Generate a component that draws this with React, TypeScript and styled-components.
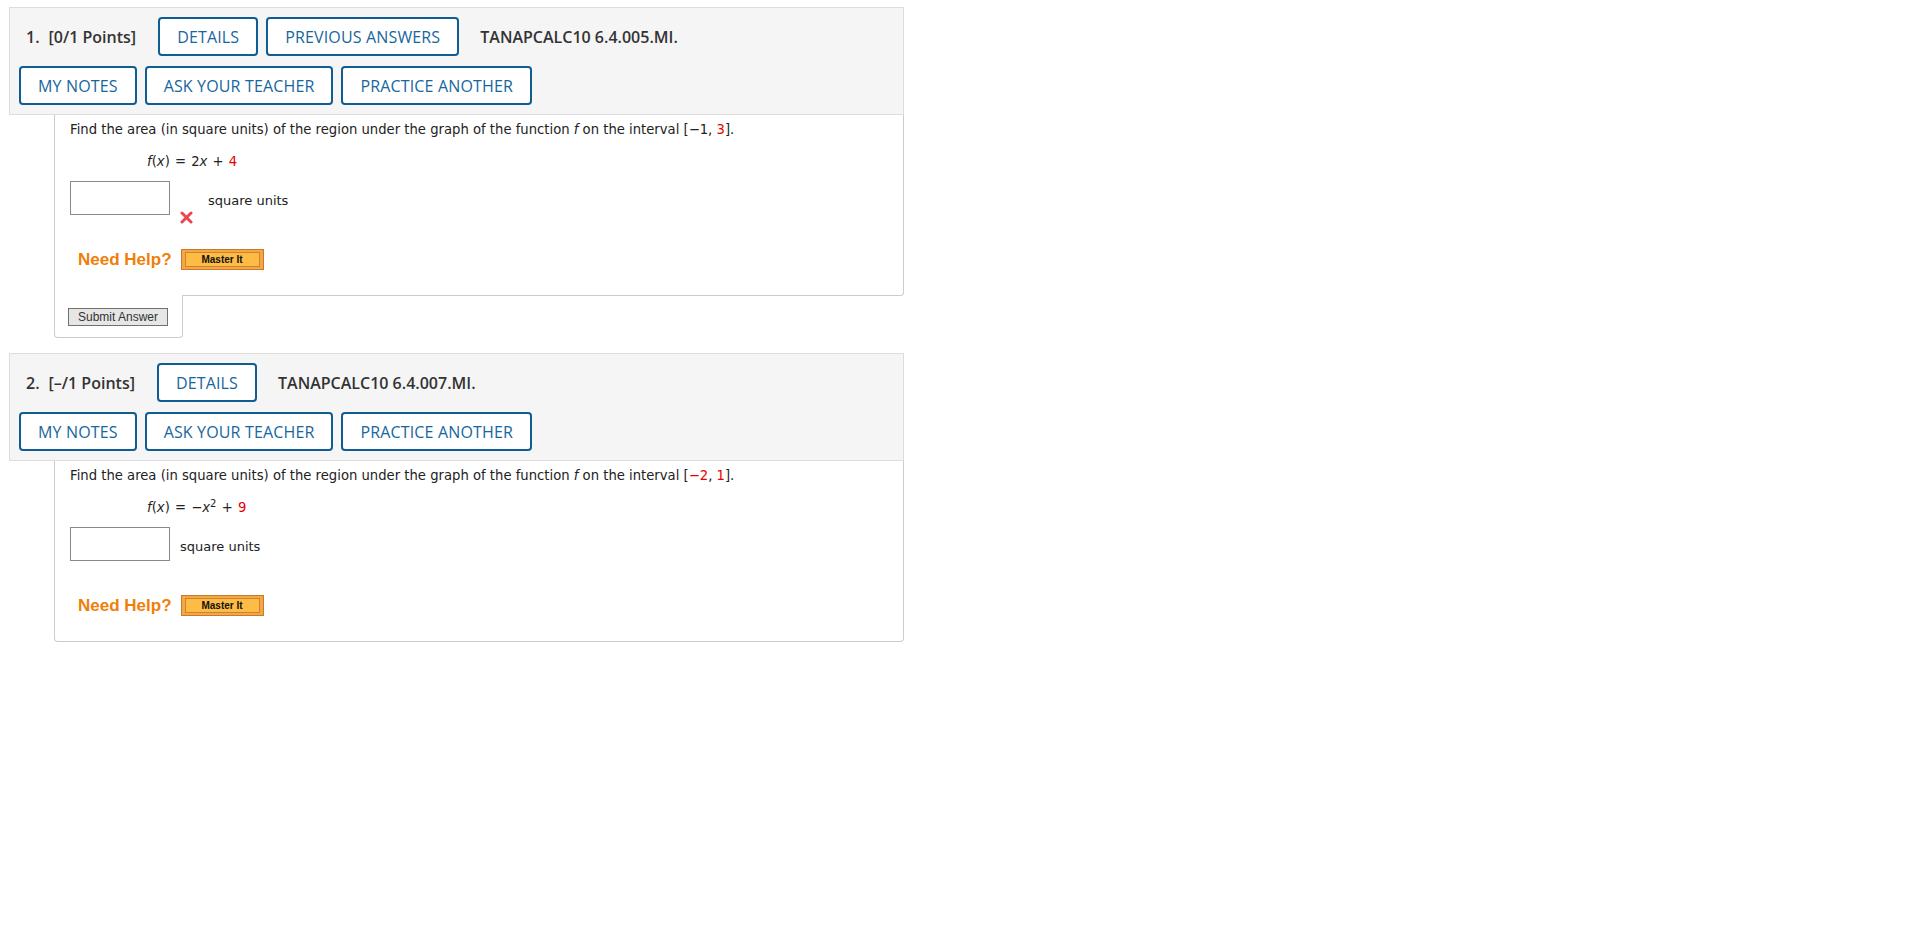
import React from 'react';
import styled, { createGlobalStyle } from 'styled-components';

const GlobalStyle = createGlobalStyle`
  body {
    margin: 0;
    background: #fff;
    font-family: 'Open Sans', 'Liberation Sans', sans-serif;
  }
`;

const Page = styled.div`
  width: 895px;
  padding: 7px 0 0 9px;
`;

const Question = styled.section`
  margin-bottom: 15px;
`;

const Header = styled.div`
  background: #f5f5f5;
  border: 1px solid #dddddd;
  padding: 9px;
  display: flex;
  flex-direction: column;
  gap: 10px;
`;

const HeaderRow = styled.div`
  display: flex;
  align-items: center;
  gap: 8px;
  height: 39px;
`;

const QNum = styled.span`
  font-size: 16px;
  font-weight: 600;
  color: #333;
  margin-left: 7px;
  display: flex;
  gap: 9px;
  margin-right: 14px;
`;

const Code = styled.span`
  font-size: 16px;
  font-weight: 600;
  color: #333;
  margin-left: 13px;
`;

const HeadButton = styled.button`
  height: 39px;
  box-sizing: border-box;
  padding: 0 17px;
  border: 2px solid #0f5d93;
  border-radius: 4px;
  background: #fff;
  color: #17669e;
  font-family: 'Open Sans', 'Liberation Sans', sans-serif;
  font-size: 16px;
  font-weight: 400;
  letter-spacing: 0.15px;
  text-transform: uppercase;
  cursor: pointer;
`;

const Body = styled.div<{ $tab?: boolean }>`
  width: 850px;
  margin-left: 45px;
  box-sizing: border-box;
  border: 1px solid #cccccc;
  border-top: none;
  border-radius: ${(p) => (p.$tab ? '0 0 4px 0' : '0 0 4px 4px')};
  padding: 6px 15px 25px;
  font-family: 'DejaVu Sans', Verdana, sans-serif;
  font-size: 13.2px;
  color: #222;
`;

const Prompt = styled.div`
  line-height: 18px;
`;

const Formula = styled.div`
  line-height: 18px;
  margin: 14px 0 0 77px;
  word-spacing: 1px;
`;

const Red = styled.span`
  color: #e80000;
`;

const Sup = styled.sup`
  font-size: 10px;
  line-height: 0;
`;

const AnswerRow = styled.div`
  display: flex;
  align-items: center;
  height: 34px;
  margin-top: 10px;
`;

const AnswerInput = styled.input`
  width: 100px;
  height: 34px;
  box-sizing: border-box;
  border: 1px solid #8a8a8a;
  margin: 0;
  padding: 0 4px;
`;

const Wrong = styled.span`
  align-self: flex-end;
  margin: 0 0 -9px 10px;
  display: flex;
`;

const Unit = styled.span<{ $gap: number }>`
  margin-left: ${(p) => p.$gap}px;
  padding-top: 5px;
  font-size: 13px;
`;

const HelpRow = styled.div`
  display: flex;
  align-items: center;
  margin: 34px 0 0 8px;
  height: 21px;
`;

const NeedHelp = styled.span`
  font-family: 'Liberation Sans', Arial, sans-serif;
  font-size: 17px;
  font-weight: 700;
  color: #ef7f0a;
  margin-right: 9px;
`;

const MasterIt = styled.span`
  width: 83px;
  height: 21px;
  box-sizing: border-box;
  border: 1px solid #c77a2c;
  background: #f7a741;
  padding: 2px 3px;
  display: flex;
`;

const MasterInner = styled.span`
  flex: 1;
  border: 1px solid #c98537;
  background: #ffbc45;
  display: flex;
  align-items: center;
  justify-content: center;
  font-family: 'Liberation Sans', Arial, sans-serif;
  font-size: 10px;
  font-weight: 700;
  color: #111;
`;

const SubmitTab = styled.div`
  width: 129px;
  margin: -1px 0 0 45px;
  box-sizing: border-box;
  border: 1px solid #cccccc;
  border-top: none;
  border-radius: 0 0 4px 4px;
  background: #fff;
  padding: 13px 0 11px 13px;
`;

const SubmitButton = styled.button`
  width: 100px;
  height: 18px;
  box-sizing: border-box;
  border: 1px solid #707070;
  background: #e6e6e6;
  font-family: 'Liberation Sans', Arial, sans-serif;
  font-size: 12px;
  color: #333;
  padding: 0;
  display: block;
`;

const XMark = () => (
  <svg width="13" height="13" viewBox="0 0 13 13">
    <path d="M2 2 L11 11 M11 2 L2 11" stroke="#ea4650" strokeWidth="3" strokeLinecap="round" />
  </svg>
);

const Need = () => (
  <HelpRow>
    <NeedHelp>Need Help?</NeedHelp>
    <MasterIt>
      <MasterInner>Master It</MasterInner>
    </MasterIt>
  </HelpRow>
);

interface HeaderProps {
  num: number;
  points: string;
  code: string;
  previous?: boolean;
}

const QuestionHeader: React.FC<HeaderProps> = ({ num, points, code, previous }) => (
  <Header>
    <HeaderRow>
      <QNum>
        <span>{num}.</span>
        <span>[{points} Points]</span>
      </QNum>
      <HeadButton>Details</HeadButton>
      {previous && <HeadButton>Previous Answers</HeadButton>}
      <Code>{code}</Code>
    </HeaderRow>
    <HeaderRow>
      <HeadButton>My Notes</HeadButton>
      <HeadButton>Ask Your Teacher</HeadButton>
      <HeadButton>Practice Another</HeadButton>
    </HeaderRow>
  </Header>
);

const App: React.FC = () => {
  return (
    <Page>
      <GlobalStyle />
      <Question>
        <QuestionHeader num={1} points="0/1" code="TANAPCALC10 6.4.005.MI." previous />
        <Body $tab>
          <Prompt>
            Find the area (in square units) of the region under the graph of the function <i>f</i> on the
            interval [−1, <Red>3</Red>].
          </Prompt>
          <Formula>
            <i>f</i>(<i>x</i>) = 2<i>x</i> + <Red>4</Red>
          </Formula>
          <AnswerRow>
            <AnswerInput type="text" />
            <Wrong>
              <XMark />
            </Wrong>
            <Unit $gap={15}>square units</Unit>
          </AnswerRow>
          <Need />
        </Body>
        <SubmitTab>
          <SubmitButton>Submit Answer</SubmitButton>
        </SubmitTab>
      </Question>
      <Question>
        <QuestionHeader num={2} points="–/1" code="TANAPCALC10 6.4.007.MI." />
        <Body>
          <Prompt>
            Find the area (in square units) of the region under the graph of the function <i>f</i> on the
            interval [<Red>−2</Red>, <Red>1</Red>].
          </Prompt>
          <Formula>
            <i>f</i>(<i>x</i>) = −<i>x</i>
            <Sup>2</Sup> + <Red>9</Red>
          </Formula>
          <AnswerRow>
            <AnswerInput type="text" />
            <Unit $gap={10}>square units</Unit>
          </AnswerRow>
          <Need />
        </Body>
      </Question>
    </Page>
  );
};

export default App;
